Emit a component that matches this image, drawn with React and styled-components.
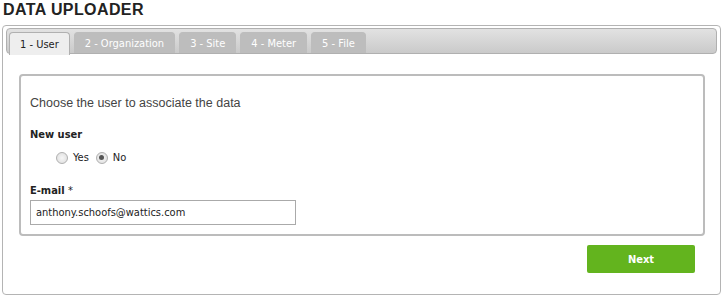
import React from 'react';
import styled, { createGlobalStyle } from 'styled-components';

const Global = createGlobalStyle`
  body {
    margin: 0;
    background: #fff;
    font-family: "DejaVu Sans Condensed", "DejaVu Sans", Verdana, sans-serif;
    font-size: 11px;
    color: #222;
  }
`;

const Page = styled.div`
  padding: 0 4px 0 2px;
`;

const Title = styled.h1`
  margin: 0 0 6px 1px;
  font-family: "Liberation Sans", Arial, sans-serif;
  font-size: 16px;
  letter-spacing: 0.4px;
  font-weight: bold;
  line-height: 19px;
  color: #222;
`;

const Frame = styled.div`
  height: 270px;
  border: 1px solid #b4b4b4;
  border-radius: 4px;
  padding: 2px 3px;
  box-sizing: border-box;
  display: flex;
  flex-direction: column;
`;

const TabBar = styled.div`
  display: flex;
  gap: 4px;
  height: 26px;
  box-sizing: border-box;
  padding: 3px 2px 0;
  border: 1px solid #b0b0b0;
  border-radius: 4px;
  background: linear-gradient(#e2e2e2, #cacaca);
`;

const Tab = styled.div`
  height: ${p => (p.$active ? '23px' : '21px')};
  box-sizing: border-box;
  padding: 0 10px;
  display: flex;
  align-items: center;
  border: 1px solid ${p => (p.$active ? '#b0b0b0' : '#bdbdbd')};
  border-bottom: none;
  border-radius: 4px 4px 0 0;
  background: ${p => (p.$active ? '#eeeeee' : '#bdbdbd')};
  color: ${p => (p.$active ? '#222' : '#fff')};
  font-size: 11px;
  white-space: nowrap;
`;

const Body = styled.div`
  flex: 1;
  display: flex;
  flex-direction: column;
  padding: 20px 12px 0 13px;
`;

const Panel = styled.div`
  height: 162px;
  box-sizing: border-box;
  border: 2px solid #bcbcbc;
  border-radius: 4px;
  padding: 20px 10px 0 9px;
`;

const Heading = styled.div`
  font-family: "Liberation Sans", Arial, sans-serif;
  font-size: 12.5px;
  color: #444;
  line-height: 15px;
  margin-bottom: 17px;
`;

const Label = styled.div`
  font-weight: bold;
  font-size: 11px;
  line-height: 13px;
  color: #222;
  margin-bottom: ${p => p.$mb || 10}px;
`;

const Star = styled.span`
  font-weight: normal;
`;

const Radios = styled.div`
  display: flex;
  align-items: center;
  padding-left: 26px;
  margin-bottom: 20px;
  font-size: 11px;
`;

const RadioLabel = styled.label`
  display: flex;
  align-items: center;
  gap: 5px;
  margin-right: 7px;
`;

const Radio = styled.span`
  width: 12px;
  height: 12px;
  box-sizing: border-box;
  border-radius: 50%;
  border: 1px solid #b0b0b0;
  background: radial-gradient(#f6f6f6, #dcdcdc);
  display: flex;
  align-items: center;
  justify-content: center;
  &::after {
    content: '';
    display: ${p => (p.$checked ? 'block' : 'none')};
    width: 5px;
    height: 5px;
    border-radius: 50%;
    background: #555;
  }
`;

const Input = styled.input`
  width: 266px;
  height: 25px;
  box-sizing: border-box;
  border: 1px solid #aaa;
  padding: 0 5px;
  font-family: "DejaVu Sans Condensed", "DejaVu Sans", Verdana, sans-serif;
  font-size: 11px;
  color: #222;
  outline: none;
`;

const Actions = styled.div`
  display: flex;
  justify-content: flex-end;
  padding: 9px 10px 0 0;
`;

const Button = styled.button`
  width: 108px;
  height: 28px;
  border: none;
  border-radius: 2px;
  background: #63b41e;
  color: #fff;
  font-family: "DejaVu Sans Condensed", "DejaVu Sans", Verdana, sans-serif;
  font-size: 11px;
  font-weight: bold;
  cursor: pointer;
`;

const tabs = [
  { label: '1 - User', active: true },
  { label: '2 - Organization' },
  { label: '3 - Site' },
  { label: '4 - Meter' },
  { label: '5 - File' },
];

export default function App() {
  return (
    <Page>
      <Global />
      <Title>DATA UPLOADER</Title>
      <Frame>
        <TabBar>
          {tabs.map(t => (
            <Tab key={t.label} $active={t.active}>{t.label}</Tab>
          ))}
        </TabBar>
        <Body>
          <Panel>
            <Heading>Choose the user to associate the data</Heading>
            <Label>New user</Label>
            <Radios>
              <RadioLabel><Radio />Yes</RadioLabel>
              <RadioLabel><Radio $checked />No</RadioLabel>
            </Radios>
            <Label $mb={3}>E-mail <Star>*</Star></Label>
            <Input defaultValue="anthony.schoofs@wattics.com" />
          </Panel>
          <Actions>
            <Button>Next</Button>
          </Actions>
        </Body>
      </Frame>
    </Page>
  );
}
